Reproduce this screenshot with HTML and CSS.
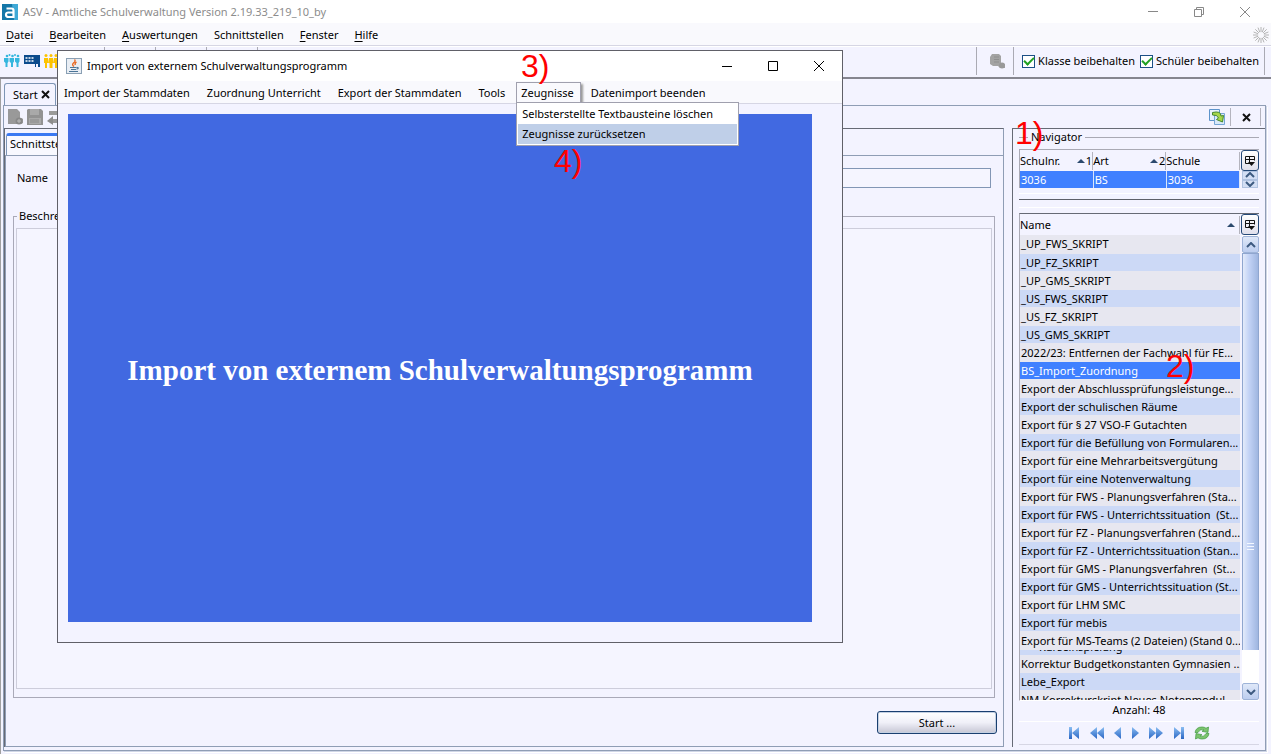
FILE: index.html
```html
<!DOCTYPE html>
<html lang="de">
<head>
<meta charset="utf-8">
<title>ASV - Amtliche Schulverwaltung</title>
<link rel="stylesheet" href="styles.css">
</head>
<body>
<svg class="defs" aria-hidden="true">
  <defs>
    <linearGradient id="blue" x1="0" y1="0" x2="0" y2="1"><stop offset="0" stop-color="#8abdf2"/><stop offset="1" stop-color="#2a66c4"/></linearGradient>
    <symbol id="columns" viewBox="0 0 10 12"><path d="M0.500 1.500h9v4M0.500 1.500v7h4M0 4.500h10M4.500 1v8" fill="none" stroke="#111"/><path d="M3 7h7L6.500 11z" fill="#111"/></symbol>
    <symbol id="chev-up" viewBox="0 0 10 6"><path d="M1 5l4-4 4 4" fill="none" stroke="#3d5a80" stroke-width="2"/></symbol>
    <symbol id="chev-down" viewBox="0 0 10 6"><path d="M1 1l4 4 4-4" fill="none" stroke="#3d5a80" stroke-width="2"/></symbol>
    <symbol id="sort" viewBox="0 0 8 4"><path d="M0 4l4-4 4 4z" fill="#2c4a6e"/></symbol>
  </defs>
</svg>

<header class="titlebar">
  <svg class="app-icon" width="16" height="16" viewBox="0 0 16 16"><rect width="16" height="16" fill="#1477a8"/><path d="M10 0h6v16h-4z" fill="#3fa9d6"/><path d="M4.500 4.500h5q2 0 2 2v6.500h-5q-2.500 0-2.500-2.300t2.500-2.200h4.500" fill="none" stroke="#fff" stroke-width="2.200"/></svg>
  <span>ASV - Amtliche Schulverwaltung Version 2.19.33_219_10_by</span>
  <div class="window-buttons">
    <button aria-label="Minimieren"><svg width="12" height="12"><path d="M1 5.500h10" stroke="#888"/></svg></button>
    <button aria-label="Wiederherstellen"><svg width="12" height="12" fill="none" stroke="#888"><path d="M1.500 3.500h7v7h-7zM3.500 3V1.500h7v7H9"/></svg></button>
    <button aria-label="Schließen"><svg width="12" height="12"><path d="M1 1l10 10M11 1L1 11" stroke="#888"/></svg></button>
  </div>
</header>

<nav class="menubar">
  <button><u>D</u>atei</button>
  <button><u>B</u>earbeiten</button>
  <button><u>A</u>uswertungen</button>
  <button>Schnittstellen</button>
  <button><u>F</u>enster</button>
  <button><u>H</u>ilfe</button>
  <svg class="busy" width="16" height="16" viewBox="0 0 16 16" stroke="#b4b4b4"><path d="M8 0v5M8 11v5M0 8h5M11 8h5M2.300 2.300l3.600 3.600M10.100 10.100l3.600 3.600M2.300 13.700l3.600-3.600M10.100 5.900l3.600-3.600M5 .6l1.800 4.600M9.200 10.800l1.800 4.600M.6 5l4.600 1.800M10.800 9.200l4.600 1.800M11 .6L9.200 5.200M6.800 10.800L5 15.400M.6 11l4.600-1.800M10.800 6.800L15.400 5"/></svg>
</nav>

<div class="toolbar">
  <svg width="16" height="14" viewBox="0 0 16 14" fill="#35b6de"><circle cx="3" cy="2" r="1.300"/><circle cx="8.500" cy="2" r="1.300"/><circle cx="14" cy="2" r="1.300"/><circle cx="5.500" cy="1" r="1"/><circle cx="11" cy="1" r="1"/><path d="M0 4h4.500v3.500L3.500 9v4h-2V9L0 7.500zM5.500 4H10v3.500L9 9v4H7V9L5.500 7.500zM11 4h4.500v3.500l-1 1.500v4h-2V9L11 7.500z"/></svg>
  <svg width="16" height="14" viewBox="0 0 16 14"><path d="M0 1h16v12h-2v-3h-2v3h-1v-3H0z" fill="#0b4a8c"/><path d="M1.500 4h2M4.500 4h2M7.500 4h2M1.500 7h2M4.500 7h2M7.500 7h2" stroke="#fff" stroke-width="1.500"/></svg>
  <svg width="16" height="14" viewBox="0 0 16 14" fill="#fdc300"><circle cx="2" cy="1.500" r="1.500"/><circle cx="7" cy="1.500" r="1.500"/><circle cx="12" cy="1.500" r="1.500"/><path d="M0 4h4v5H3v5H1V9H0zM5 4h4l1 5H8.500v5h-3V9H4zM10 4h4v5h-1v5h-2V9h-1z"/></svg>
  <div class="tool-groups"><i></i><i></i><i></i><i></i></div>
  <div class="toolbar-right">
    <svg class="gray-tool" width="16" height="16" viewBox="0 0 16 16"><path d="M3 1h7l2 2v7l4 1v4h-5l-2-2H4L1 11V4z" fill="#a3a3a3"/><circle cx="13" cy="12.500" r="3" fill="#999"/><path d="M5 4h5M5 6.500h5M5 9h5" stroke="#8f8f8f"/></svg>
    <label><input type="checkbox" checked>Klasse beibehalten</label>
    <label><input type="checkbox" checked>Schüler beibehalten</label>
  </div>
</div>

<main class="workspace">
  <div class="doc-tabs"><button class="doc-tab">Start <svg width="9" height="9"><path d="M1 1l7 7M8 1L1 8" stroke="#111" stroke-width="2"/></svg></button></div>
  <div class="doc">
    <div class="doc-toolbar">
      <svg width="16" height="16" viewBox="0 0 16 16"><path d="M1 0h9l3 3v6a3 3 0 0 1 1 6H1z" fill="#999"/><circle cx="12" cy="12" r="3.500" fill="#888"/><path d="M12 10v4M10 12h4" stroke="#bbb"/></svg>
      <svg width="16" height="16" viewBox="0 0 16 16"><path d="M0 1l1-1h13l2 2v14H0z" fill="#929292"/><path d="M3 0h9v6H3zM2 9h12v6H2z" fill="#a9a9a9"/><path d="M3 11h9M3 13h9" stroke="#8b8b8b"/></svg>
      <svg width="16" height="16" viewBox="0 0 16 16"><path d="M2 2h11v4H2zM6 10h10v4H6z" fill="#9a9a9a"/><path d="M0 12l6-5v9z" fill="#8d8d8d"/></svg>
      <div class="doc-toolbar-right">
        <button aria-label="Aktualisieren"><svg width="16" height="16" viewBox="0 0 16 16"><path d="M.5.500h10v11H.5z" fill="#e8f2fc" stroke="#5c93cb"/><path d="M5.500 4.500h10v11h-10z" fill="#d9e9f9" stroke="#75a5d5"/><path d="M3.500 3.500Q12 1.500 12 7l2.500-.5-1 6.500-6-2.500 2-1.500Q8.500 5.500 3.500 6z" fill="#a6d64a" stroke="#43872c"/></svg></button>
        <button class="doc-close" aria-label="Schließen"><svg width="9" height="9"><path d="M1 1l7 7M8 1L1 8" stroke="#111" stroke-width="2"/></svg></button>
      </div>
    </div>
    <div class="split">
      <section class="editor">
        <div class="sub-tabs"><button class="sub-tab">Schnittstelle</button></div>
        <div class="editor-body">
          <div class="name-row"><label for="name">Name</label><input id="name" type="text"></div>
          <fieldset class="description"><legend><label for="desc">Beschreibung</label></legend><textarea id="desc"></textarea></fieldset>
          <div class="actions"><button class="start">Start ...</button></div>
        </div>
      </section>
      <aside class="navigator">
        <h2 class="nav-title"><span>Navigator</span></h2>
        <div class="grid">
          <table class="schools">
            <thead><tr><th><div><span>Schulnr.</span><em><svg width="8" height="4"><use href="#sort"/></svg>1</em></div></th><th><div><span>Art</span><em><svg width="8" height="4"><use href="#sort"/></svg>2</em></div></th><th><div><span>Schule</span></div></th></tr></thead>
            <tbody><tr><td>3036</td><td>BS</td><td>3036</td></tr></tbody>
          </table>
          <div class="side">
            <button class="colbtn" aria-label="Spalten"><svg width="10" height="12"><use href="#columns"/></svg></button>
            <button class="spin" aria-label="Nach oben"><svg width="10" height="6"><use href="#chev-up"/></svg></button>
            <button class="spin" aria-label="Nach unten"><svg width="10" height="6"><use href="#chev-down"/></svg></button>
          </div>
        </div>
        <div class="divider"></div>
        <div class="grid list">
          <div class="list-clip">
          <table class="scripts">
            <thead><tr><th><div><span>Name</span><em><svg width="8" height="4"><use href="#sort"/></svg></em></div></th></tr></thead>
            <tbody>
              <tr><td>_UP_FWS_SKRIPT</td></tr>
              <tr><td>_UP_FZ_SKRIPT</td></tr>
              <tr><td>_UP_GMS_SKRIPT</td></tr>
              <tr><td>_US_FWS_SKRIPT</td></tr>
              <tr><td>_US_FZ_SKRIPT</td></tr>
              <tr><td>_US_GMS_SKRIPT</td></tr>
              <tr><td>2022/23: Entfernen der Fachwahl für FE...</td></tr>
              <tr class="selected"><td>BS_Import_Zuordnung</td></tr>
              <tr><td>Export der Abschlussprüfungsleistunge...</td></tr>
              <tr><td>Export der schulischen Räume</td></tr>
              <tr><td>Export für § 27 VSO-F Gutachten</td></tr>
              <tr><td>Export für die Befüllung von Formularen...</td></tr>
              <tr><td>Export für eine Mehrarbeitsvergütung</td></tr>
              <tr><td>Export für eine Notenverwaltung</td></tr>
              <tr><td>Export für FWS - Planungsverfahren (Sta...</td></tr>
              <tr><td>Export für FWS - Unterrichtssituation&nbsp; (St...</td></tr>
              <tr><td>Export für FZ - Planungsverfahren (Stand...</td></tr>
              <tr><td>Export für FZ - Unterrichtssituation (Stan...</td></tr>
              <tr><td>Export für GMS - Planungsverfahren&nbsp; (St...</td></tr>
              <tr><td>Export für GMS - Unterrichtssituation (St...</td></tr>
              <tr><td>Export für LHM SMC</td></tr>
              <tr><td>Export für mebis</td></tr>
              <tr><td>Export für MS-Teams (2 Dateien) (Stand 0...</td></tr>
              <tr class="cut"><td><div>Kurseinspielung</div></td></tr>
              <tr><td>Korrektur Budgetkonstanten Gymnasien ...</td></tr>
              <tr><td>Lebe_Export</td></tr>
              <tr><td>NM Korrekturskript Neues Notenmodul</td></tr>
            </tbody>
          </table>
          </div>
          <div class="side">
            <button class="colbtn" aria-label="Spalten"><svg width="10" height="12"><use href="#columns"/></svg></button>
            <div class="scroll">
              <button class="arrow" aria-label="Nach oben"><svg width="10" height="6"><use href="#chev-up"/></svg></button>
              <div class="thumb"><svg width="7" height="8"><path d="M0 .5h7M0 3.500h7M0 6.500h7" stroke="#f4f8ff"/></svg></div>
              <button class="arrow" aria-label="Nach unten"><svg width="10" height="6"><use href="#chev-down"/></svg></button>
            </div>
          </div>
        </div>
        <p class="count">Anzahl: 48</p>
        <div class="pager">
          <button aria-label="Erster"><svg width="12" height="14"><path d="M1 1h3v12H1zM11 1v12L4 7z" fill="url(#blue)"/></svg></button>
          <button aria-label="Zurückblättern"><svg width="15" height="14"><path d="M8 1v12L1 7zM15 1v12L8 7z" fill="url(#blue)"/></svg></button>
          <button aria-label="Voriger"><svg width="9" height="14"><path d="M8 1v12L1 7z" fill="url(#blue)"/></svg></button>
          <button aria-label="Nächster"><svg width="9" height="14"><path d="M1 1v12L8 7z" fill="url(#blue)"/></svg></button>
          <button aria-label="Vorblättern"><svg width="15" height="14"><path d="M0 1v12L7 7zM7 1v12l7-6z" fill="url(#blue)"/></svg></button>
          <button aria-label="Letzter"><svg width="12" height="14"><path d="M8 1h3v12H8zM1 1v12l7-6z" fill="url(#blue)"/></svg></button>
          <button aria-label="Neu laden"><svg width="16" height="14" viewBox="0 0 16 14" fill="#7cc46e" stroke="#3f9a3f" stroke-width=".7"><path d="M1 6.500Q2 1 8 1q2.500 0 4 1.200L14.500 1l-.5 5.500-6-1.200 2-1.500Q6 2.500 4 6.500z"/><path d="M15 7.500Q14 13 8 13q-2.500 0-4-1.200L1.500 13 2 7.500l6 1.200-2 1.500q4 1.300 6-2.700z"/></svg></button>
        </div>
      </aside>
    </div>
  </div>
</main>

<div class="dialog" role="dialog" aria-label="Import von externem Schulverwaltungsprogramm">
  <div class="dialog-title">
    <svg width="16" height="16" viewBox="0 0 16 16"><rect x=".5" y=".5" width="15" height="15" fill="#e9eef4" stroke="#8aa0b4"/><path d="M8.500 1.500q1.500 1.500-.8 3.300T8 8.500M10.500 4q-2 1.200-1.200 3" fill="none" stroke="#e8641b" stroke-width="1.300"/><path d="M4 9.500h6.500M5 11.500h5M3 13.500h9M10.800 9.300q2 0 1.200 1.200l-1.500.7" fill="none" stroke="#4b7597" stroke-width="1.200"/></svg>
    <span>Import von externem Schulverwaltungsprogramm</span>
    <div class="dialog-buttons">
      <button aria-label="Minimieren"><svg width="12" height="12"><path d="M1 6.500h10" stroke="#000"/></svg></button>
      <button aria-label="Maximieren"><svg width="12" height="12"><path d="M1.500 1.500h9v9h-9z" fill="none" stroke="#000"/></svg></button>
      <button aria-label="Schließen"><svg width="12" height="12"><path d="M1 1l10 10M11 1L1 11" stroke="#000"/></svg></button>
    </div>
  </div>
  <nav class="dialog-menu">
    <button>Import der Stammdaten</button>
    <button>Zuordnung Unterricht</button>
    <button>Export der Stammdaten</button>
    <button>Tools</button>
    <div class="open-menu">
      <button class="open">Zeugnisse</button>
      <div class="dropdown">
        <button>Selbsterstellte Textbausteine löschen</button>
        <button class="hover">Zeugnisse zurücksetzen</button>
      </div>
    </div>
    <button>Datenimport beenden</button>
  </nav>
  <div class="dialog-body"><h1 class="banner">Import von externem Schulverwaltungsprogramm</h1></div>
</div>

<span class="mark mark-1">1)</span>
<span class="mark mark-2">2)</span>
<span class="mark mark-3">3)</span>
<span class="mark mark-4">4)</span>
</body>
</html>
```
FILE: styles.css
```css
* { box-sizing: border-box; }
body {
  margin: 0;
  height: 100vh;
  display: flex;
  flex-direction: column;
  overflow: hidden;
  position: relative;
  background: #f3f3ff;
  color: #000;
  font: 11px/16px "Noto Sans", sans-serif;
}
button, input, textarea { font: inherit; color: inherit; }
button { background: none; border: 0; padding: 0; white-space: nowrap; }
svg { display: block; flex: none; }
.defs { position: absolute; width: 0; height: 0; }

.titlebar { height: 23px; flex: none; display: flex; align-items: center; gap: 5px; padding-left: 2px; background: #fff; color: #8c8c8c; }
.window-buttons { margin-left: auto; display: flex; gap: 34px; padding-right: 20px; }

.menubar { height: 23px; flex: none; display: flex; align-items: center; gap: 16px; padding: 1px 2px 0 6px; background: #f9f9fd; border-bottom: 1px solid #d6d6e4; }
.menubar u { text-underline-offset: 2px; }
.busy { margin-left: auto; }

.toolbar { height: 33px; flex: none; display: flex; align-items: center; gap: 4px; padding: 0 6px 2px 4px; border-top: 1px solid #fff; border-bottom: 2px solid #85858f; }
.tool-groups { display: flex; gap: 50px; padding-left: 40px; height: 100%; }
.tool-groups i { width: 1px; background: #aaaab4; }
.toolbar-right { margin-left: auto; display: flex; align-items: center; height: 100%; gap: 5px; padding-right: 5px; border-right: 1px solid #aaaab4; }
.toolbar-right label { display: flex; align-items: center; gap: 3px; }
.gray-tool { box-sizing: content-box; padding: 6px 8px 6px 12px; border: 1px solid #aaaab4; border-width: 0 1px; margin-right: 3px; }
.toolbar input { appearance: none; width: 13px; height: 13px; margin: 0; border: 1px solid #1c4f86; background: #fff; display: grid; place-items: center; }
.toolbar input::after { content: ""; width: 8px; height: 4px; border: solid #21a121; border-width: 0 0 2px 2px; transform: rotate(-45deg); margin-bottom: 3px; }

.workspace { flex: 1; min-height: 0; display: flex; flex-direction: column; padding: 4px 5px 3px 2px; border-left: 1px solid #a0a0a0; }
.doc-tabs { display: flex; padding-left: 1px; }
.doc-tab { height: 22px; display: flex; align-items: center; gap: 3px; padding: 0 5px 0 8px; border: 1px solid #7d95b5; border-bottom: 0; border-radius: 3px 3px 0 0; }
.doc { flex: 1; min-height: 0; display: flex; flex-direction: column; border: 1px solid #8f9db5; box-shadow: 1px 1px 0 #d0d6e6, 2px 2px 0 #fff; }
.doc-toolbar { height: 22px; flex: none; display: flex; align-items: center; gap: 4px; padding-left: 3px; }
.doc-toolbar-right { margin-left: auto; display: flex; align-items: center; gap: 5px; height: 100%; }
.doc-close { padding: 0 9px 0 11px; height: 18px; border: 1px solid #b4b4be; border-width: 0 1px; margin-right: 4px; }
.split { flex: 1; min-height: 0; display: flex; gap: 8px; padding-bottom: 3px; }
.editor { flex: 1; min-width: 0; display: flex; flex-direction: column; border: 1px solid #666a75; border-width: 1px 1px 0 1px; border-right-color: #8f9db5; padding-top: 4px; }
.sub-tabs { display: flex; padding-left: 1px; }
.sub-tab { height: 22px; padding: 0 3px 3px; background: #f8f8ff; border: 1px solid #7d95b5; border-bottom: 0; border-top: 3px solid #3a78f2; border-radius: 3px 3px 0 0; }
.editor-body { flex: 1; min-height: 0; display: flex; flex-direction: column; border: 1px solid #8f9db5; border-width: 1px 0 1px 1px; padding: 12px 6px 12px 7px; }
.name-row { display: flex; align-items: center; gap: 40px; padding: 0 6px 0 4px; }
.name-row input { flex: 1; height: 20px; border: 1px solid #8296b5; background: #f5f5ff; }
.description { flex: 1; min-height: 0; display: flex; margin: 20px 2px 0 0; padding: 4px 2px 8px; border: 1px solid #a9a9b8; min-width: 0; }
.description legend { padding: 0 2px; margin-left: 1px; }
.description textarea { flex: 1; resize: none; border: 1px solid #cdcddb; background: #f5f5ff; }
.actions { display: flex; justify-content: flex-end; padding-top: 13px; }
.start { width: 120px; height: 23px; border: 1px solid #1a3f70; border-radius: 3px; background: linear-gradient(#fff, #f0f0f8 50%, #c6c6d4); box-shadow: inset 0 0 0 1px #c4d0e2; }

.navigator { width: 253px; flex: none; display: flex; flex-direction: column; border: 1px solid #666a75; border-width: 1px 0 0 1px; padding: 0 6px 2px; }
.nav-title { margin: 0 0 4px; font: inherit; display: flex; align-items: center; gap: 3px; }
.nav-title::before { content: ""; width: 9px; height: 1px; background: #a9a9b4; }
.nav-title::after { content: ""; flex: 1; height: 1px; background: #a9a9b4; }
.grid { display: flex; flex: none; border-top: 1px solid #a9a9b4; border-left: 1px solid #a9a9b4; }
.grid table { flex: 1; min-width: 0; width: 100%; table-layout: fixed; border-collapse: collapse; }
.grid th { height: 21px; padding: 0; font-weight: 400; }
.grid th > div { display: flex; justify-content: space-between; align-items: center; height: 18px; border-right: 1px solid #b4b4be; }
.grid em { font-style: normal; display: flex; align-items: center; gap: 1px; }
.grid td { height: 18px; padding: 0 1px; line-height: 17px; white-space: nowrap; overflow: hidden; border-bottom: 1px solid #e7e7f0; }
.grid .schools td { height: 17px; line-height: 16px; color: #fff; background: #4080ff; border-right: 1px solid #dce6f8; border-bottom: 0; }
.side { width: 18px; margin-left: 1px; flex: none; display: flex; flex-direction: column; }
.colbtn { height: 21px; display: grid; place-items: center; border: 1px solid #264a78; border-radius: 3px; background: linear-gradient(#fff, #e0e0ec); flex: none; }
.spin { flex: 1; display: grid; place-items: center; margin: 0 1px; background: #d3def4; border: 1px solid #b0c2e0; min-height: 0; }
.divider { flex: none; height: 15px; margin: 5px 0; border: 1px solid #fff; border-width: 1px 0; display: flex; align-items: flex-start; padding-top: 5px; }
.divider::before { content: ""; width: 100%; height: 1px; background: #5e6068; }
.list { flex: 1; min-height: 0; border-bottom: 1px solid #fff; border-top-color: #666a75; }
.list-clip { flex: 1; min-width: 0; overflow: hidden; }
.scripts th > div { padding-right: 4px; }
.scripts tbody td { background: #e7e7f0; }
.scripts tbody tr:nth-child(even) td { background: #ccd9f6; }
.scripts tbody tr.selected:nth-child(even) td { color: #fff; background: #4080ff; }
.scripts .cut td { height: 5px; border: 0; line-height: 16px; }
.cut div { height: 5px; display: flex; align-items: flex-end; overflow: hidden; padding-left: 18px; }
.scroll { flex: 1; min-height: 0; display: flex; flex-direction: column; background: #fff; margin-left: 1px; padding-top: 1px; }
.arrow { height: 17px; flex: none; display: grid; place-items: center; background: linear-gradient(#dfe8f8, #bccdef); border: 1px solid #9eb3d8; border-radius: 2px; }
.thumb { flex: 1; margin-bottom: 33px; display: grid; place-items: center; padding-bottom: 0; border: 1px solid #8fa6cf; border-bottom: 0; background: linear-gradient(90deg, #e3ebfa, #c3d3f6 40%, #9fb6e0); }
.thumb svg { margin-top: 190px; }
.count { margin: 0; padding: 1px 0 3px; text-align: center; border-bottom: 1px solid #fff; }
.pager { height: 23px; flex: none; display: flex; align-items: center; justify-content: center; gap: 9px; border-bottom: 1px solid #d6d6e4; }

.dialog { position: absolute; left: 57px; top: 50px; width: 786px; height: 593px; display: flex; flex-direction: column; background: #f3f3ff; border: 1px solid #606068; }
.dialog-title { height: 30px; flex: none; display: flex; align-items: center; gap: 5px; padding: 0 17px 0 8px; background: #fff; }
.dialog-buttons { margin-left: auto; display: flex; gap: 34px; }
.dialog-menu { height: 23px; flex: none; display: flex; align-items: center; gap: 17px; padding: 1px 0 0 6px; background: #f9f9fd; border-bottom: 1px solid #d6d6e4; }
.open-menu { position: relative; align-self: stretch; margin: 0 -7px 0 -6px; }
.open { height: 21px; padding: 0 6px 0 4px; background: #f9f9fd; border: 1px solid #a0a0ae; border-bottom: 0; box-shadow: 2px 2px 2px #999; }
.dropdown { position: absolute; left: 0; top: 20px; z-index: 1; width: 223px; padding: 1px; display: flex; flex-direction: column; background: #fff; border: 1px solid #a0a0ae; }
.dropdown button { height: 20px; text-align: left; padding: 0 4px; }
.dropdown .hover { background: #bfcfe8; }
.dialog-body { flex: 1; display: flex; padding: 10px 30px 20px 10px; }
.banner { flex: 1; margin: 0; padding-top: 4px; display: grid; place-items: center; background: #4169e1; color: #fff; font: bold 29px/36px "Liberation Serif", serif; white-space: nowrap; }

.mark { position: absolute; color: #f00; font: 32px/36px "Liberation Sans", sans-serif; }
.mark-1 { left: 1015px; top: 115px; }
.mark-2 { left: 1166px; top: 348px; }
.mark-3 { left: 521px; top: 48px; }
.mark-4 { left: 554px; top: 143px; }
```
